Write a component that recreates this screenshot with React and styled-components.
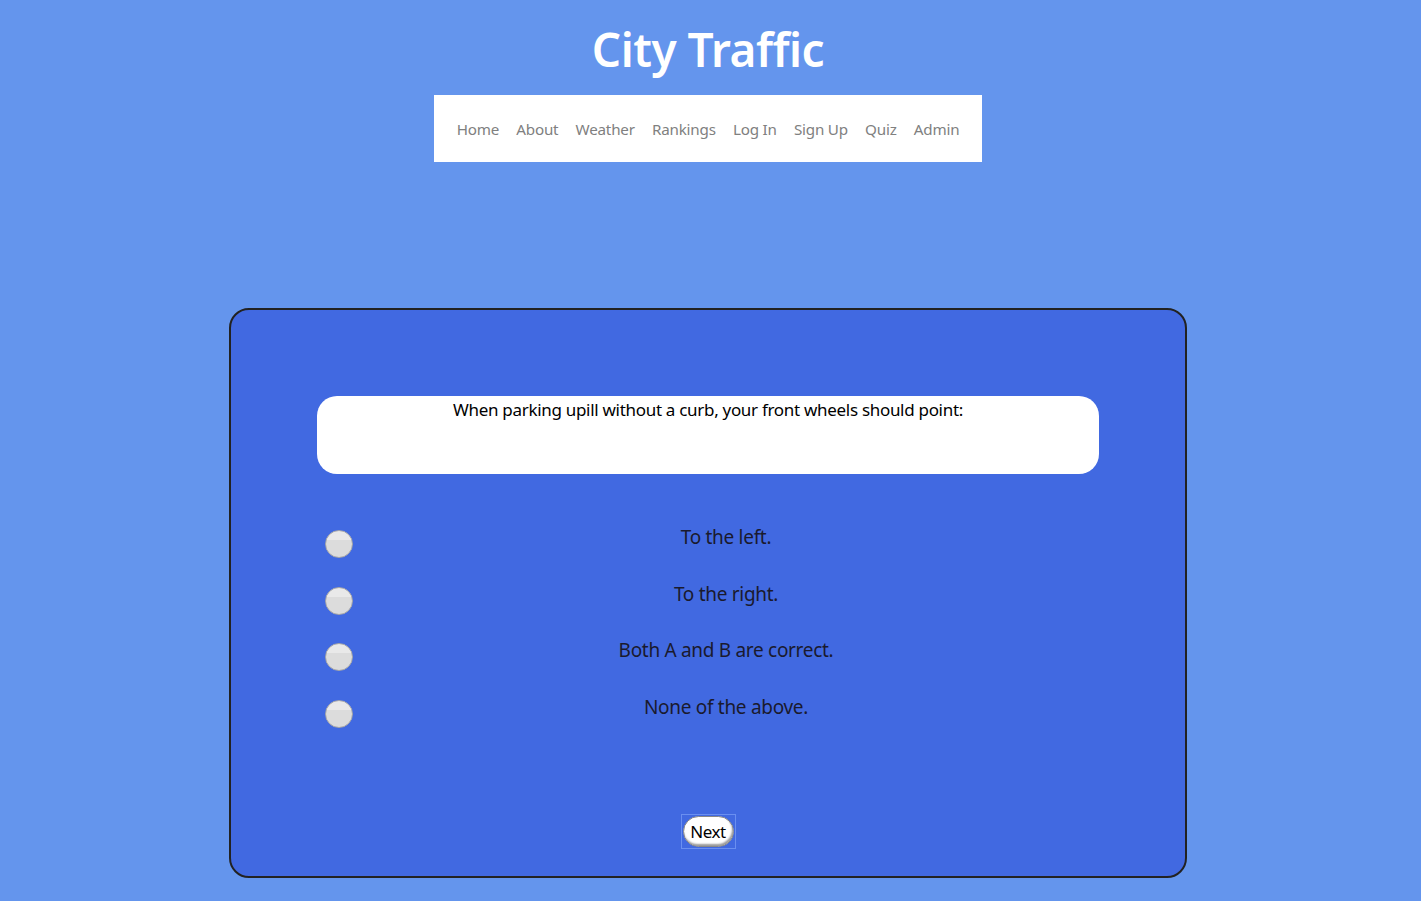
import React from "react";
import styled, { createGlobalStyle } from "styled-components";

const Global = createGlobalStyle`
  html, body { margin: 0; padding: 0; }
  body {
    background: #6495ed;
    font-family: "Noto Sans", "Open Sans", sans-serif;
    min-height: 901px;
  }
`;

const Page = styled.div`
  display: flex;
  flex-direction: column;
  align-items: center;
  padding-top: 18px;
  padding-right: 5px;
`;

const Title = styled.h1`
  margin: 0;
  color: #fff;
  font-size: 46px;
  font-weight: 600;
  line-height: 62px;
  letter-spacing: -0.5px;
`;

const Nav = styled.nav`
  margin-top: 15px;
  width: 548px;
  height: 67px;
  box-sizing: border-box;
  background: #fff;
  display: flex;
  align-items: center;
  justify-content: center;
  gap: 17.2px;
`;

const NavLink = styled.a`
  color: #808080;
  font-size: 15.2px;
  text-decoration: none;
  letter-spacing: -0.2px;
`;

const Card = styled.main`
  margin-top: 146px;
  width: 958px;
  height: 570px;
  box-sizing: border-box;
  background: #4169e1;
  border: 2px solid #222;
  border-radius: 20px;
  padding: 86px;
  display: flex;
  flex-direction: column;
`;

const Question = styled.div`
  height: 78px;
  background: #fff;
  border-radius: 20px;
  text-align: center;
  font-size: 17px;
  color: #000;
  padding-top: 2px;
  box-sizing: border-box;
  letter-spacing: -0.3px;
`;

const Answers = styled.div`
  margin-top: 56px;
  display: flex;
  flex-direction: column;
  gap: 28.6px;
`;

const Row = styled.label`
  display: flex;
  align-items: center;
  height: 28px;
`;

const Radio = styled.span`
  width: 28px;
  height: 28px;
  margin-left: 8px;
  box-sizing: border-box;
  border-radius: 50%;
  border: 1px solid #a8a8a8;
  background: linear-gradient(#e9e9e9 0%, #e9e9e9 35%, #dcdcdc 36%, #dcdcdc 100%);
  flex: none;
`;

const AnswerText = styled.span`
  flex: 1;
  text-align: center;
  font-size: 19px;
  color: #1a1a2e;
  margin-top: -14px;
  letter-spacing: -0.3px;
`;

const Footer = styled.div`
  margin-top: auto;
  display: flex;
  justify-content: center;
  margin-bottom: -58px;
`;

const Focus = styled.div`
  padding: 1px;
  outline: 1px solid #6a8ff0;
  display: flex;
`;

const NextButton = styled.button`
  font-family: inherit;
  font-size: 17px;
  color: #000;
  background: #fff;
  border: 1px solid #888;
  border-radius: 16px;
  box-shadow: inset -1px -2px 2px #999;
  width: 51px;
  height: 31px;
  padding: 0;
  letter-spacing: -0.4px;
`;

const links = ["Home", "About", "Weather", "Rankings", "Log In", "Sign Up", "Quiz", "Admin"];
const answers = ["To the left.", "To the right.", "Both A and B are correct.", "None of the above."];

export default function App() {
  return (
    <>
      <Global />
      <Page>
        <Title>City Traffic</Title>
        <Nav>
          {links.map((l) => (
            <NavLink key={l} href="#">{l}</NavLink>
          ))}
        </Nav>
        <Card>
          <Question>When parking upill without a curb, your front wheels should point:</Question>
          <Answers>
            {answers.map((a) => (
              <Row key={a}>
                <Radio />
                <AnswerText>{a}</AnswerText>
              </Row>
            ))}
          </Answers>
          <Footer>
            <Focus>
              <NextButton>Next</NextButton>
            </Focus>
          </Footer>
        </Card>
      </Page>
    </>
  );
}
